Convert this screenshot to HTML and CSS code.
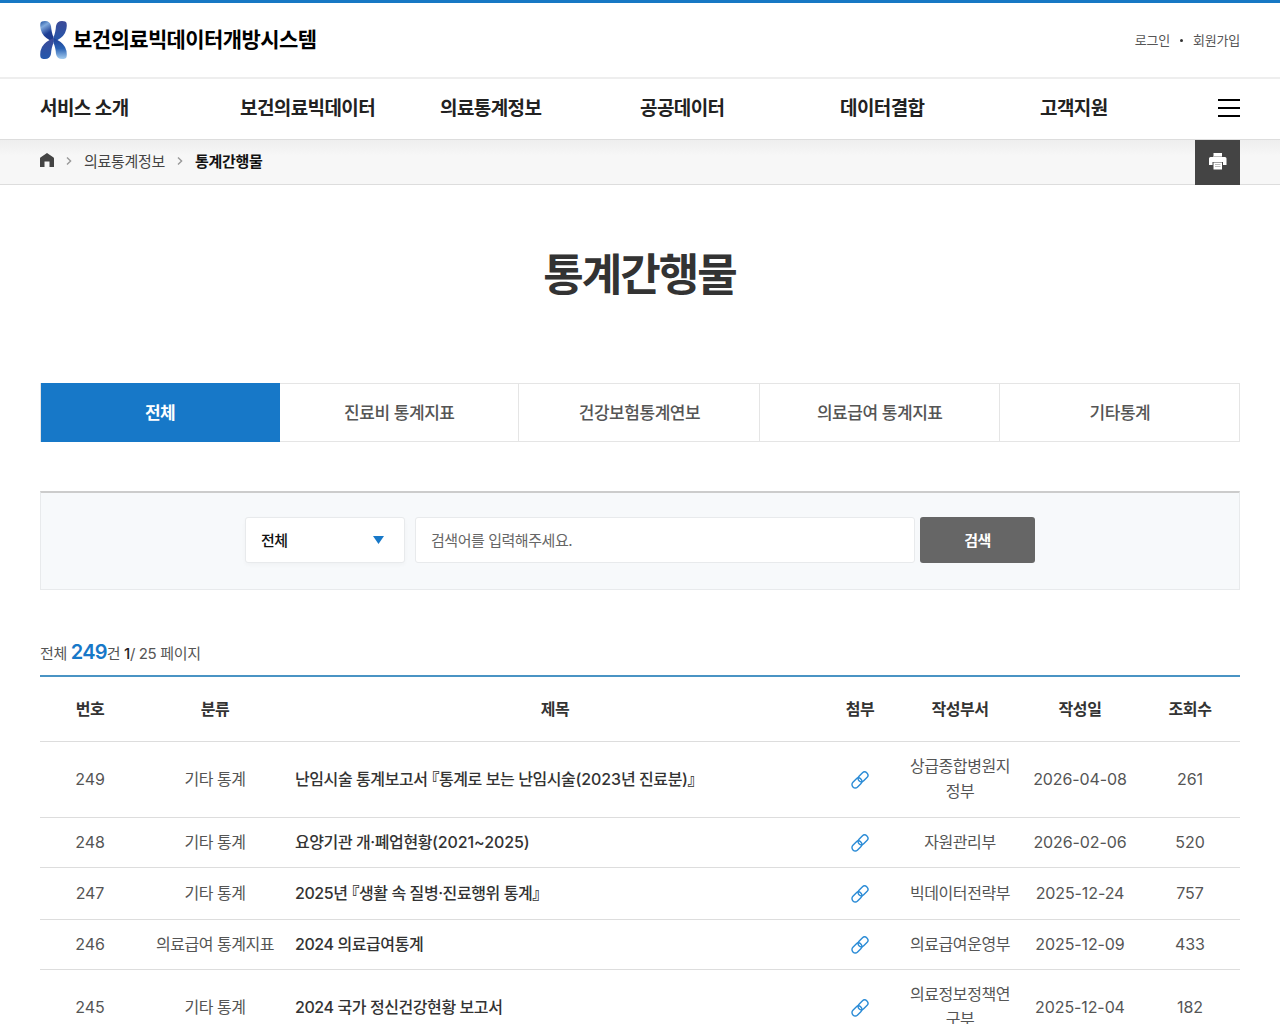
FILE: index.html
```html
<!DOCTYPE html>
<html lang="ko">
<head>
    <meta charset="UTF-8">
    <meta name="viewport" content="width=device-width, initial-scale=1.0">
    <title>통계간행물 | 보건의료빅데이터개방시스템</title>
    <link rel="stylesheet" href="styles.css">
</head>
<body>
    <!-- Icon sprite -->
    <svg class="sprite" width="0" height="0">
        <symbol id="icon-link" viewBox="0 0 18 18">
            <g transform="rotate(-45 9 9)" fill="none" stroke="#2a8bd6" stroke-width="1.4">
                <rect x="-0.9" y="5.6" width="11.2" height="6.6" rx="3.3"/>
                <rect x="7.7" y="5.6" width="11.2" height="6.6" rx="3.3"/>
            </g>
        </symbol>
    </svg>

    <!-- Header -->
    <header class="header">
        <div class="inner header-top">
            <a class="logo">
                <svg class="logo-icon" width="27" height="40" viewBox="0 0 27 40">
                    <defs>
                        <linearGradient id="g1" x1="0" y1="0" x2="0.4" y2="1">
                            <stop offset="0" stop-color="#1d4f9e"/>
                            <stop offset="0.3" stop-color="#7fa9dc"/>
                            <stop offset="0.7" stop-color="#1e3f95"/>
                            <stop offset="1" stop-color="#1e3a8c"/>
                        </linearGradient>
                        <linearGradient id="g2" x1="0" y1="0" x2="0" y2="1">
                            <stop offset="0" stop-color="#3c4a98"/>
                            <stop offset="1" stop-color="#2458ac"/>
                        </linearGradient>
                        <linearGradient id="g3" x1="0" y1="0" x2="0" y2="1">
                            <stop offset="0" stop-color="#1e3f95"/>
                            <stop offset="0.5" stop-color="#2a62b4"/>
                            <stop offset="1" stop-color="#a5cdf0"/>
                        </linearGradient>
                    </defs>
                    <path fill="url(#g1)" d="M.5 3Q1 1 5 1Q10 1 11 6Q11.500 13 13.500 17V22Q5 18.500 2 13Q-.5 8 .5 3Z"/>
                    <path fill="url(#g2)" d="M26.500 3Q26 1 22 1Q17 1 16 6Q15.500 13 13.500 17V22Q22 18.500 25 13Q27.500 8 26.500 3Z"/>
                    <path fill="url(#g2)" d="M.5 37Q1 39 5 39Q10 39 11 34Q11.500 27 13.500 23V18Q5 21.500 2 27Q-.5 32 .5 37Z"/>
                    <path fill="url(#g3)" d="M26.500 37Q26 39 22 39Q17 39 16 34Q15.500 27 13.500 23V18Q22 21.500 25 27Q27.500 32 26.500 37Z"/>
                </svg>
                <span class="logo-text">보건의료빅데이터개방시스템</span>
            </a>
            <div class="user-menu">
                <a>로그인</a>
                <span class="dot"></span>
                <a>회원가입</a>
            </div>
        </div>
        <nav class="gnb">
            <div class="inner gnb-inner">
                <a>서비스 소개</a>
                <a>보건의료빅데이터</a>
                <a>의료통계정보</a>
                <a>공공데이터</a>
                <a>데이터결합</a>
                <a>고객지원</a>
                <button class="menu-button" aria-label="전체메뉴"><i></i><i></i><i></i></button>
            </div>
        </nav>
    </header>

    <!-- Breadcrumb -->
    <div class="breadcrumb">
        <div class="inner breadcrumb-inner">
            <svg class="home" width="14" height="14" viewBox="0 0 14 14"><path fill="#444" d="M7 0L13.600 4.600Q14 5 14 5.500V14H9.500V8.500H4.500V14H0V5.500Q0 5 .4 4.600Z"/></svg>
            <svg class="arrow" width="6" height="8" viewBox="0 0 6 8"><path fill="none" stroke="#999" stroke-width="1.400" d="M1 .5L4.600 4L1 7.500"/></svg>
            <a>의료통계정보</a>
            <svg class="arrow" width="6" height="8" viewBox="0 0 6 8"><path fill="none" stroke="#999" stroke-width="1.400" d="M1 .5L4.600 4L1 7.500"/></svg>
            <strong>통계간행물</strong>
            <button class="print-button" aria-label="인쇄">
                <svg width="18" height="17" viewBox="0 0 18 17">
                    <path fill="#fff" d="M4.500 0H13V4H16Q17.500 4 17.500 5.500V12H14V9H3.500V12H0V5.500Q0 4 1.500 4H4.500Z"/>
                    <path fill="#fff" d="M4.500 9.500H13V16.500H4.500Z"/>
                    <path stroke="#bbb" d="M4.500 3.500H13M6 11.500H11.500M6 13.500H11.500"/>
                </svg>
            </button>
        </div>
    </div>

    <main class="inner">
        <h1 class="page-title">통계간행물</h1>

        <!-- Tabs -->
        <div class="tabs">
            <a class="tab active">전체</a>
            <a class="tab">진료비 통계지표</a>
            <a class="tab">건강보험통계연보</a>
            <a class="tab">의료급여 통계지표</a>
            <a class="tab">기타통계</a>
        </div>

        <!-- Search -->
        <form class="search-box">
            <div class="select">
                <span>전체</span>
                <svg width="11" height="8" viewBox="0 0 11 8"><path fill="#1778c8" d="M0 0H11L5.500 8Z"/></svg>
            </div>
            <input class="search-input" type="text" placeholder="검색어를 입력해주세요.">
            <button class="search-button" type="button">검색</button>
        </form>

        <p class="total">전체 <b class="count">249</b>건 <b class="page">1</b>/ 25 페이지</p>

        <!-- Board list -->
        <table class="board">
            <colgroup>
                <col class="w100"><col class="w150"><col><col class="w80"><col class="w120"><col class="w120"><col class="w100">
            </colgroup>
            <thead>
                <tr>
                    <th>번호</th>
                    <th>분류</th>
                    <th>제목</th>
                    <th>첨부</th>
                    <th>작성부서</th>
                    <th>작성일</th>
                    <th>조회수</th>
                </tr>
            </thead>
            <tbody>
                <tr>
                    <td class="num">249</td>
                    <td>기타 통계</td>
                    <td class="title"><a>난임시술 통계보고서 <span class="quote">『</span>통계로 보는 난임시술<span class="digits">(2023</span>년 진료분)<span class="quote">』</span></a></td>
                    <td><svg class="link-icon" width="18" height="18"><use href="#icon-link"/></svg></td>
                    <td>상급종합병원지정부</td>
                    <td class="num">2026-04-08</td>
                    <td class="num">261</td>
                </tr>
                <tr>
                    <td class="num">248</td>
                    <td>기타 통계</td>
                    <td class="title"><a>요양기관 개·폐업현황<span class="digits">(2021~2025)</span></a></td>
                    <td><svg class="link-icon" width="18" height="18"><use href="#icon-link"/></svg></td>
                    <td>자원관리부</td>
                    <td class="num">2026-02-06</td>
                    <td class="num">520</td>
                </tr>
                <tr>
                    <td class="num">247</td>
                    <td>기타 통계</td>
                    <td class="title"><a>2025년 <span class="quote">『</span>생활 속 질병·진료행위 통계<span class="quote">』</span></a></td>
                    <td><svg class="link-icon" width="18" height="18"><use href="#icon-link"/></svg></td>
                    <td>빅데이터전략부</td>
                    <td class="num">2025-12-24</td>
                    <td class="num">757</td>
                </tr>
                <tr>
                    <td class="num">246</td>
                    <td>의료급여 통계지표</td>
                    <td class="title"><a>2024 의료급여통계</a></td>
                    <td><svg class="link-icon" width="18" height="18"><use href="#icon-link"/></svg></td>
                    <td>의료급여운영부</td>
                    <td class="num">2025-12-09</td>
                    <td class="num">433</td>
                </tr>
                <tr>
                    <td class="num">245</td>
                    <td>기타 통계</td>
                    <td class="title"><a>2024 국가 정신건강현황 보고서</a></td>
                    <td><svg class="link-icon" width="18" height="18"><use href="#icon-link"/></svg></td>
                    <td>의료정보정책연구부</td>
                    <td class="num">2025-12-04</td>
                    <td class="num">182</td>
                </tr>
            </tbody>
        </table>
    </main>
</body>
</html>
```
FILE: styles.css
```css
* {
    box-sizing: border-box;
    margin: 0;
    padding: 0;
}

html {
    overflow: hidden;
}

body {
    height: 1024px;
    overflow: hidden;
    background-color: #fff;
    border-top: 3px solid #1778c4;
    font-family: Inter, 'Noto Sans CJK KR', sans-serif;
    font-size: 16px;
    letter-spacing: -0.45px;
    color: #555;
}

button,
input {
    font-family: inherit;
    letter-spacing: inherit;
    border: none;
}

.sprite {
    position: absolute;
}

.inner {
    width: 1200px;
    margin: 0 auto;
}

/* Header */
.header-top {
    height: 74px;
    display: flex;
    align-items: center;
    justify-content: space-between;
}

.logo {
    display: flex;
    align-items: center;
    gap: 6px;
}

.logo-text {
    padding-bottom: 4px;
    font-size: 21px;
    font-weight: 700;
    letter-spacing: -0.6px;
    color: #000;
}

.user-menu {
    display: flex;
    align-items: center;
    gap: 10px;
    font-size: 13px;
    letter-spacing: -0.2px;
}

.user-menu a {
    padding-bottom: 1px;
}

.dot {
    width: 3px;
    height: 3px;
    border-radius: 50%;
    background-color: #333;
}

.gnb {
    height: 62px;
    border-top: 2px solid #eee;
}

.gnb-inner {
    height: 58px;
    display: flex;
    align-items: center;
    font-size: 19px;
    font-weight: 600;
    letter-spacing: -0.6px;
    color: #222;
}

.gnb-inner a {
    width: 200px;
    padding-bottom: 3px;
    white-space: nowrap;
}

.gnb-inner a:nth-last-child(2) {
    width: 178px;
}

.menu-button {
    width: 22px;
    flex: none;
    display: flex;
    flex-direction: column;
    gap: 6px;
    background: none;
}

.menu-button i {
    height: 2px;
    background-color: #000;
}

/* Breadcrumb */
.breadcrumb {
    height: 46px;
    border-top: 1px solid #ddd;
    border-bottom: 1px solid #ddd;
    background: linear-gradient(#eee, #f7f7f7 16px);
}

.breadcrumb-inner {
    height: 45px;
    display: flex;
    align-items: center;
    font-size: 15px;
    letter-spacing: -0.3px;
    color: #444;
}

.breadcrumb-inner .home {
    margin-bottom: 5px;
}

.breadcrumb-inner .arrow {
    margin: 0 12px 3px 12px;
}

.breadcrumb-inner a,
.breadcrumb-inner strong {
    padding-bottom: 4px;
}

.breadcrumb-inner strong {
    color: #111;
}

.print-button {
    width: 45px;
    height: 45px;
    margin-left: auto;
    padding-bottom: 2px;
    display: flex;
    align-items: center;
    justify-content: center;
    background-color: #444;
}

.page-title {
    margin-top: 61px;
    height: 58px;
    line-height: 58px;
    text-align: center;
    text-indent: -1px;
    font-size: 44px;
    font-weight: 700;
    letter-spacing: -2px;
    color: #333;
}

/* Tabs */
.tabs {
    margin-top: 79px;
    height: 59px;
    display: flex;
    border: 1px solid #e5e5e5;
}

.tab {
    flex: 1;
    display: flex;
    align-items: center;
    justify-content: center;
    padding: 0 0 2px 1px;
    border-right: 1px solid #e5e5e5;
    font-size: 17px;
    font-weight: 500;
    color: #555;
}

.tab:last-child {
    border-right: none;
}

.tab.active {
    margin: -1px 0;
    padding-left: 0;
    background-color: #1778c8;
    border-right: none;
    box-shadow: 1px 0 0 #1778c8;
    color: #fff;
    font-weight: 700;
}

/* Search */
.search-box {
    margin-top: 49px;
    height: 99px;
    padding-bottom: 2px;
    display: flex;
    align-items: center;
    justify-content: center;
    background-color: #f7f9fb;
    border: 1px solid #e8eaec;
    border-top: 2px solid #ccc;
}

.select,
.search-input {
    height: 46px;
    padding: 0 15px;
    border: 1px solid #e8eaec;
    border-radius: 3px;
    background-color: #fff;
    font-size: 15px;
}

.select {
    width: 160px;
    margin-right: 10px;
    padding-right: 20px;
    display: flex;
    align-items: center;
    justify-content: space-between;
    font-weight: 500;
    color: #111;
    box-shadow: 0 2px 4px rgba(0, 0, 0, 0.03);
}

.select span {
    padding-bottom: 2px;
}

.search-input {
    width: 500px;
    margin-right: 5px;
}

.search-input::placeholder {
    color: #666;
}

.search-button {
    width: 115px;
    height: 46px;
    padding-bottom: 2px;
    border-radius: 3px;
    background-color: #666;
    font-size: 15px;
    font-weight: 700;
    color: #fff;
}

.total {
    margin-top: 47px;
    height: 38px;
    line-height: 30px;
    font-size: 15px;
    letter-spacing: -0.35px;
}

.total .count {
    font-size: 20px;
    font-weight: 600;
    letter-spacing: -0.8px;
    color: #1778c8;
}

.total .page {
    font-weight: 500;
    color: #222;
}

/* Board list */
.board {
    width: 100%;
    table-layout: fixed;
    border-collapse: separate;
    border-spacing: 0;
    border-top: 2px solid #4a94c4;
    line-height: 25.4px;
    text-align: center;
}

.board .w80 { width: 80px; }
.board .w100 { width: 100px; }
.board .w120 { width: 120px; }
.board .w150 { width: 150px; }

.board th {
    height: 65px;
    padding-top: 1px;
    border-bottom: 1px solid #ddd;
    font-weight: 600;
    color: #333;
}

.board td {
    padding: 12px 10px;
    border-bottom: 1px solid #ddd;
    word-break: break-all;
}

.board .num {
    padding: 12px 0;
    letter-spacing: -0.1px;
}

.board .title {
    padding: 12px 5px;
    text-align: left;
    font-weight: 500;
    letter-spacing: -0.42px;
    color: #333;
}

/* half-width quote marks */
.title .quote {
    font-family: 'Noto Sans CJK KR', sans-serif;
    font-feature-settings: 'halt';
    font-weight: 700;
}

.title .digits {
    letter-spacing: -0.1px;
}

.link-icon {
    display: block;
    margin: 1px auto 0;
}
```
